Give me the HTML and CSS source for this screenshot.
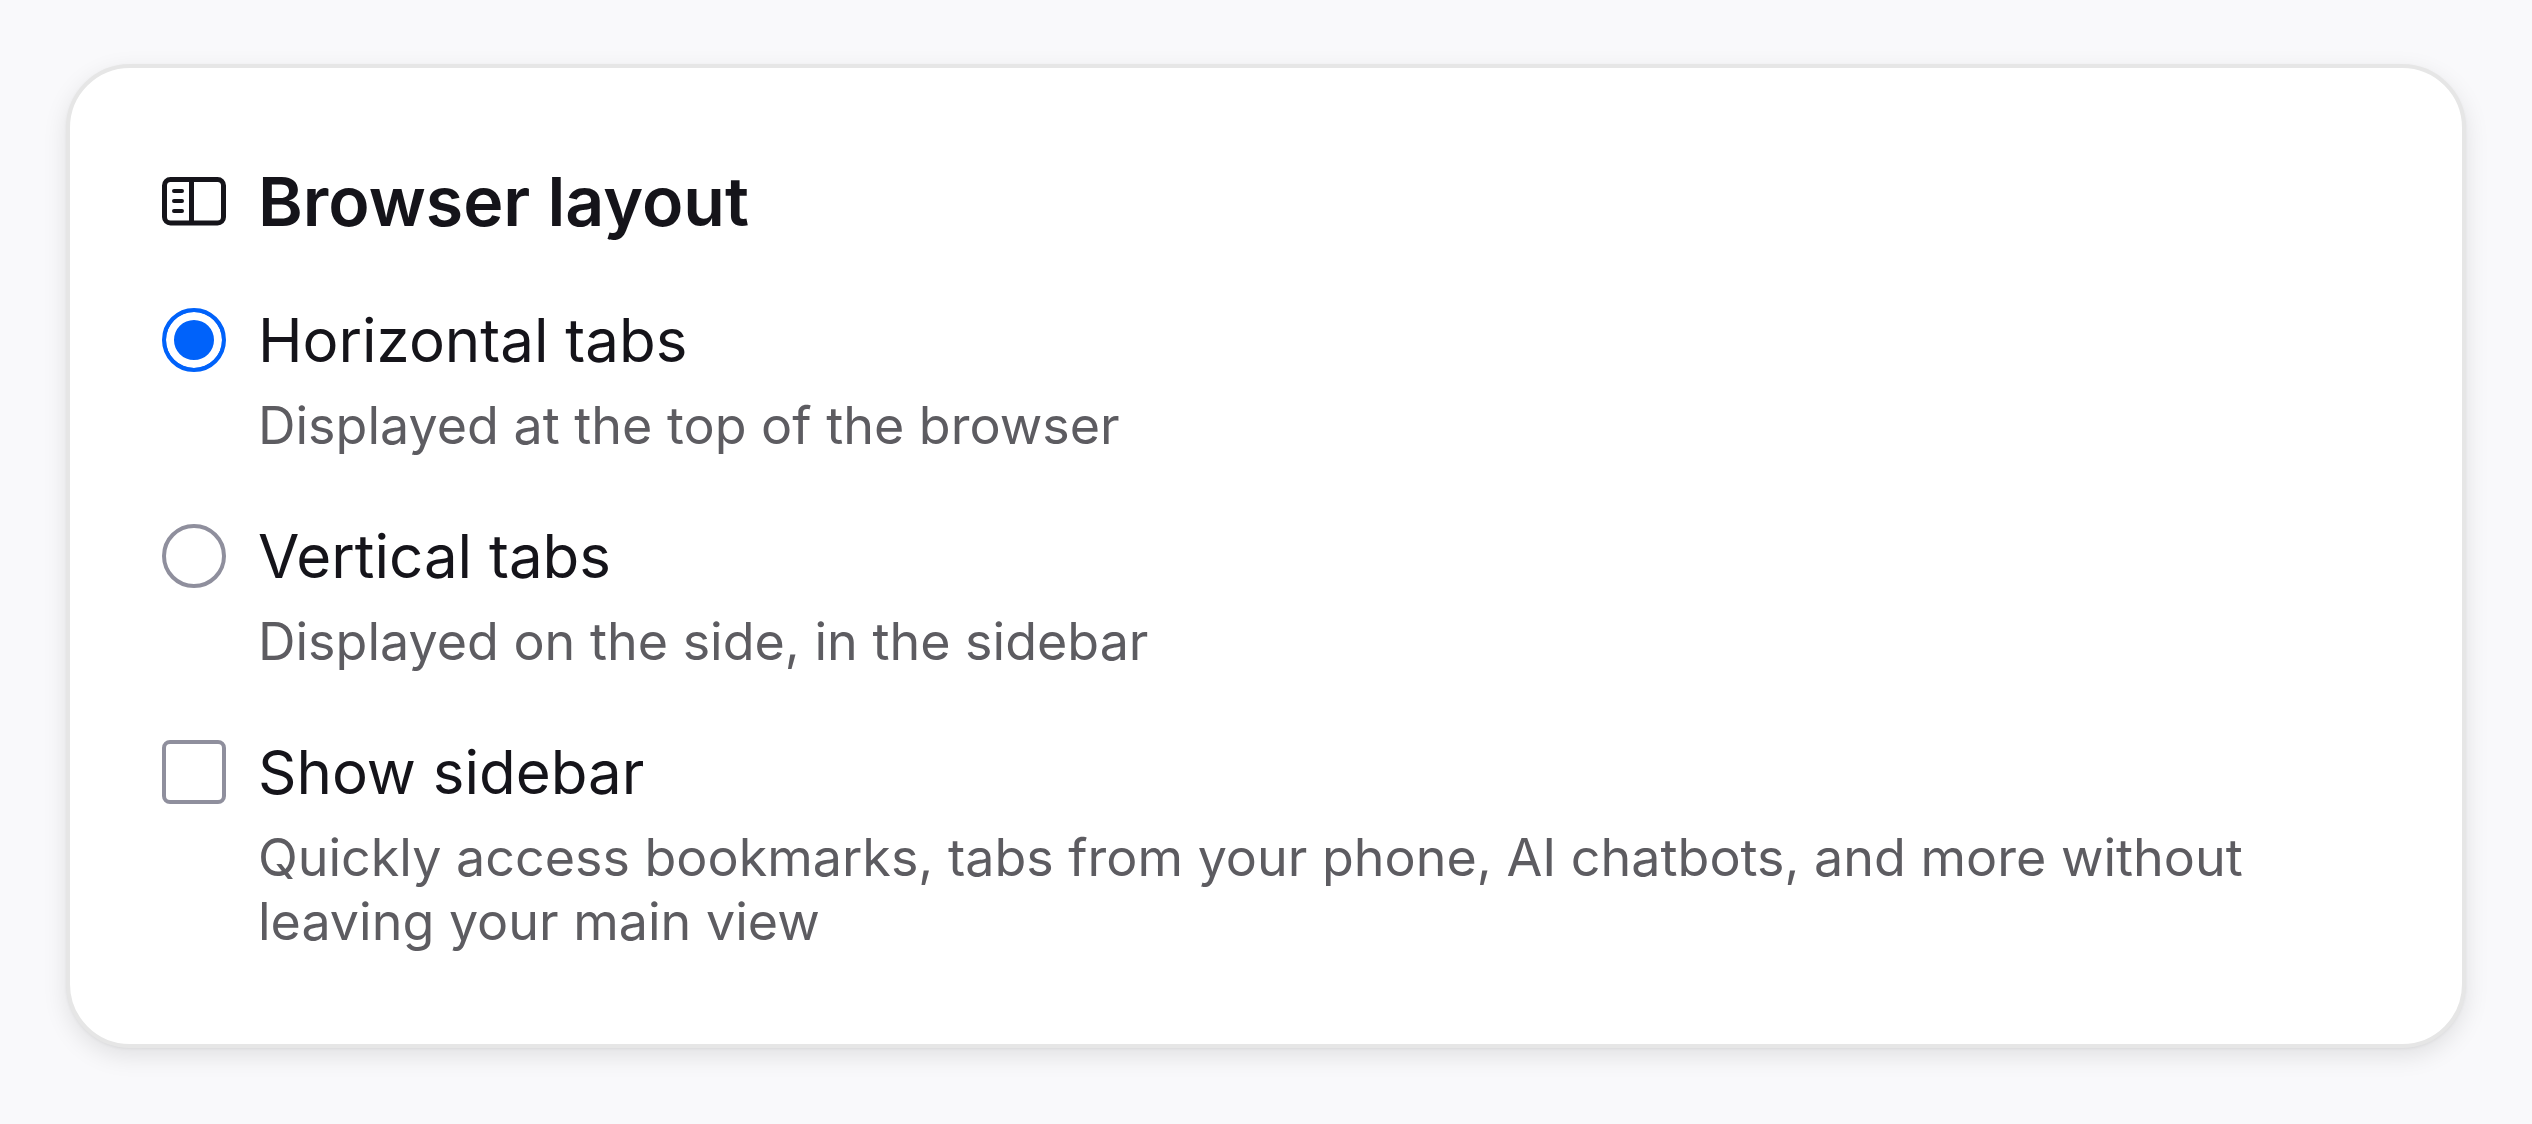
FILE: index.html
```html
<!DOCTYPE html>
<html lang="en">
<head>
	<meta charset="UTF-8">
	<title>Browser layout</title>
	<link rel="stylesheet" href="styles.css">
</head>
<body>
	<section class="card">
		<h2 class="title">
			<svg class="icon" viewBox="0 0 16 16" aria-hidden="true">
				<rect x=".625" y="2.625" width="14.75" height="10.875" rx="1.5"/>
				<path d="M7.375 2.625v10.875"/>
				<path class="lines" d="M3 5.5h2M3 8h2M3 10.5h2"/>
			</svg>
			Browser layout
		</h2>
		<div class="option">
			<input type="radio" name="layout" id="horizontal" aria-describedby="horizontal-desc" checked>
			<label for="horizontal">Horizontal tabs</label>
			<p class="desc" id="horizontal-desc">Displayed at the top of the browser</p>
		</div>
		<div class="option">
			<input type="radio" name="layout" id="vertical" aria-describedby="vertical-desc">
			<label for="vertical">Vertical tabs</label>
			<p class="desc" id="vertical-desc">Displayed on the side, in the sidebar</p>
		</div>
		<div class="option">
			<input type="checkbox" id="sidebar" aria-describedby="sidebar-desc">
			<label for="sidebar">Show sidebar</label>
			<p class="desc" id="sidebar-desc">Quickly access bookmarks, tabs from your phone, AI chatbots, and more without leaving your main view</p>
		</div>
	</section>
</body>
</html>
```

FILE: styles.css
```css
*{margin:0;padding:0;box-sizing:border-box;}
body{padding:64px 66px;background:#f9f9fb;color:#15141a;font-family:Inter,"Liberation Sans",sans-serif;font-size:60px;}

.card{display:flex;flex-direction:column;gap:66px;padding:92px 92px 90px;background:#fff;border:4px solid #e6e6e6;border-radius:64px;box-shadow:0 1px 3px rgba(0,0,0,.05),0 8px 24px rgba(0,0,0,.1);}

.title{display:flex;align-items:center;gap:32px;font-size:68px;line-height:82px;font-weight:600;}
.icon{width:64px;height:64px;fill:none;stroke:currentColor;stroke-width:1.25;}
.icon .lines{stroke-width:1;stroke-linecap:round;}

.option{display:grid;grid-template-columns:64px 1fr;column-gap:32px;row-gap:22px;align-items:center;}
.option label{line-height:64px;}
.option .desc{grid-column:2;font-size:52px;line-height:64px;color:#5d5c61;}

.option input{appearance:none;width:64px;height:64px;background:#fff;border:4px solid #8f8f9d;border-radius:8px;}
.option input[type=radio]{border-radius:50%;}
.option input[type=radio]:checked{border-color:#0062fa;background:#0062fa;box-shadow:inset 0 0 0 8px #fff;}
```
